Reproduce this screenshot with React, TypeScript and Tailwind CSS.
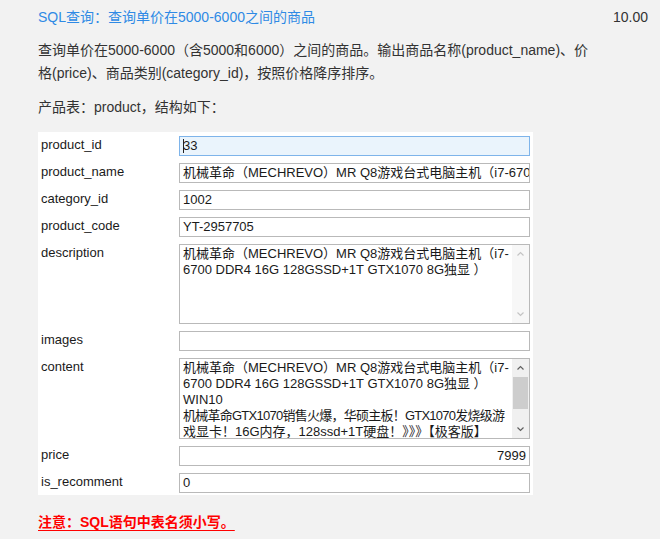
import React from 'react';

const font = { fontFamily: '"Liberation Sans", "Noto Sans CJK SC", sans-serif' };

function Field({ value, focused, right }: { value: string; focused?: boolean; right?: boolean }) {
  return (
    <div
      className={
        'min-w-0 h-[20px] border flex items-center px-[3px] overflow-hidden whitespace-nowrap text-[13px] text-[#1a1a1a] ' +
        (focused ? 'border-[#7eb4ea] bg-[#eaf4fc]' : 'border-[#b9b9b9] bg-white') +
        (right ? ' justify-end' : '')
      }
    >
      {focused && <span className="w-px h-[14px] bg-[#222] -mr-[1px]" />}
      {value}
    </div>
  );
}

function Scrollbar({ active }: { active?: boolean }) {
  return (
    <div className={'w-[17px] shrink-0 flex flex-col items-center ' + (active ? 'bg-[#f0f0f0]' : 'bg-[#f7f7f7]')}>
      <svg width="9" height="17" viewBox="0 0 9 17" className="shrink-0">
        <path d="M1.5 10.5 L4.5 7.5 L7.5 10.5" fill="none" stroke={active ? '#606060' : '#c4c4c4'} strokeWidth="1.2" />
      </svg>
      <div className="flex-1 w-full px-[1px]">
        {active && <div className="mt-[1px] h-[32px] bg-[#cdcdcd]" />}
      </div>
      <svg width="9" height="17" viewBox="0 0 9 17" className="shrink-0">
        <path d="M1.5 6.5 L4.5 9.5 L7.5 6.5" fill="none" stroke={active ? '#606060' : '#c4c4c4'} strokeWidth="1.2" />
      </svg>
    </div>
  );
}

type Line = { text: string; tight?: boolean };

function Area({ lines, height, active }: { lines: Line[]; height: string; active?: boolean }) {
  return (
    <div className={'min-w-0 border border-[#b9b9b9] bg-white flex ' + height}>
      <div className="flex-1 min-w-0 overflow-hidden pl-[3px] pt-[1px] text-[13px] leading-[16px] text-[#1a1a1a] whitespace-nowrap">
        {lines.map((l, i) => (
          <div key={i} className={l.tight ? 'tracking-[-0.75px]' : ''}>
            {l.text}
          </div>
        ))}
      </div>
      <Scrollbar active={active} />
    </div>
  );
}

const desc: Line[] = [
  { text: '机械革命（MECHREVO）MR Q8游戏台式电脑主机（i7-' },
  { text: '6700 DDR4 16G 128GSSD+1T GTX1070 8G独显 ）' },
];
const content: Line[] = [
  { text: '机械革命（MECHREVO）MR Q8游戏台式电脑主机（i7-' },
  { text: '6700 DDR4 16G 128GSSD+1T GTX1070 8G独显 ）' },
  { text: 'WIN10' },
  { text: '机械革命GTX1070销售火爆，华硕主板！GTX1070发烧级游', tight: true },
  { text: '戏显卡！16G内存，128ssd+1T硬盘！》》》【极客版】' },
];

export default function App() {
  return (
    <div className="min-h-screen bg-[#f2f2f2] pl-[38px] pr-[12px] pt-[7px]" style={font}>
      {/* 标题 */}
      <div className="flex justify-between items-center h-[20px] text-[14px]">
        <span className="text-[#2f8ae5]">SQL查询：查询单价在5000-6000之间的商品</span>
        <span className="text-[#333]">10.00</span>
      </div>

      <p className="mt-[12px] text-[14px] leading-[23px] text-[#333]">
        查询单价在5000-6000（含5000和6000）之间的商品。输出商品名称(product_name)、价
        <br />
        格(price)、商品类别(category_id)，按照价格降序排序。
      </p>
      <p className="mt-[11px] text-[14px] leading-[23px] text-[#333]">产品表：product，结构如下：</p>

      {/* 表结构 */}
      <div className="mt-[13px] w-[495px] bg-white pt-[4px] pb-[2px] pl-[3px] pr-[3px] grid grid-cols-[138px_minmax(0,1fr)] gap-y-[7px] text-[13px] text-[#1a1a1a]">
        <div className="leading-[18px]">product_id</div>
        <Field value="33" focused />
        <div className="leading-[18px]">product_name</div>
        <Field value="机械革命（MECHREVO）MR Q8游戏台式电脑主机（i7-6700 DDR4 16G 128GSSD+1T GTX1070 8G独显 ）" />
        <div className="leading-[18px]">category_id</div>
        <Field value="1002" />
        <div className="leading-[18px]">product_code</div>
        <Field value="YT-2957705" />
        <div className="leading-[18px]">description</div>
        <Area lines={desc} height="h-[80px]" />
        <div className="leading-[18px]">images</div>
        <Field value="" />
        <div className="leading-[18px]">content</div>
        <Area lines={content} height="h-[81px]" active />
        <div className="leading-[18px]">price</div>
        <Field value="7999" right />
        <div className="leading-[18px]">is_recomment</div>
        <Field value="0" />
      </div>

      <p className="mt-[17px] text-[14px] leading-[20px] font-bold text-[#ff0000] underline underline-offset-[3px]">
        注意：SQL语句中表名须小写。
      </p>
    </div>
  );
}
